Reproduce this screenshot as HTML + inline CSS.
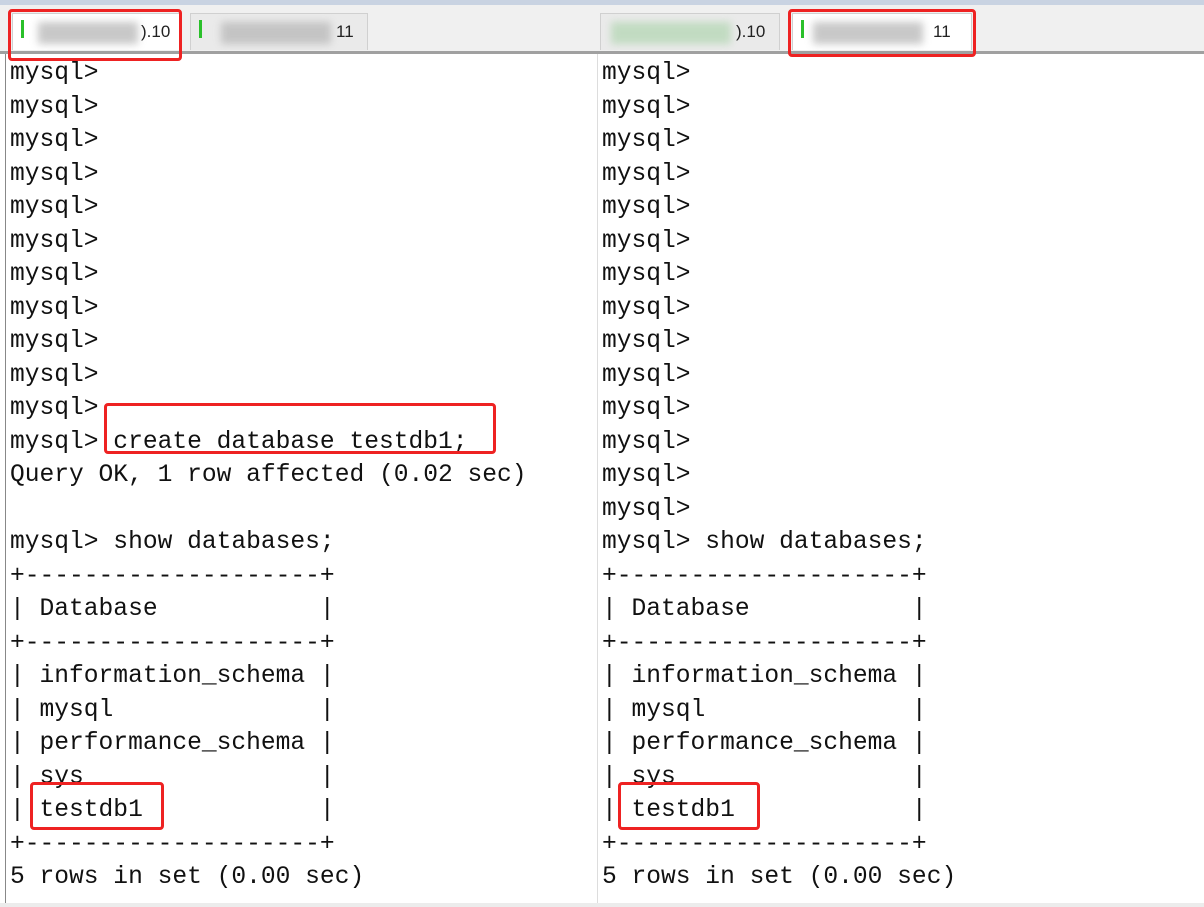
<!DOCTYPE html>
<html><head><meta charset="utf-8"><style>
html,body{margin:0;padding:0;width:1204px;height:907px;overflow:hidden;background:#fff;position:relative}
.top{position:absolute;left:0;top:0;width:1204px;height:5px;background:#c9d3e2}
.bar{position:absolute;top:5px;height:46px;background:#f0f0f0;border-bottom:3px solid #a0a0a0}
.tab{position:absolute;top:13px;height:36px;border:1px solid #d0d0d0;border-bottom:none;font:17px "Liberation Sans",sans-serif;color:#222}
.g{position:absolute;left:8px;top:6px;width:3px;height:18px;background:#2ac02a}
.blur{position:absolute;top:8px;height:22px;background:#bbb;filter:blur(4px);opacity:.8}
.num{position:absolute;top:8px}
pre{position:absolute;margin:0;top:57px;font:24.6px/33.5px "Liberation Mono",monospace;color:#111}
.red{position:absolute;border:3px solid #ee2222;border-radius:4px}
.vl{position:absolute;width:1px;background:#bbb}
</style></head><body>
<div class="top"></div>
<div class="bar" style="left:0;width:1204px"></div>
<div class="tab" style="left:12px;width:168px;background:#fff"><div class="g"></div><div class="blur" style="left:25px;width:100px"></div><span class="num" style="left:128px">).10</span></div>
<div class="tab" style="left:190px;width:176px;background:#eaeaea"><div class="g"></div><div class="blur" style="left:30px;width:110px"></div><span class="num" style="left:145px">11</span></div>
<div class="tab" style="left:600px;width:178px;background:#eaeaea"><div class="blur" style="left:10px;width:120px;background:#b8d8b8"></div><span class="num" style="left:135px">).10</span></div>
<div class="tab" style="left:792px;width:178px;background:#fff"><div class="g"></div><div class="blur" style="left:20px;width:110px"></div><span class="num" style="left:140px">11</span></div>
<div class="vl" style="left:5px;top:54px;height:850px;background:#888"></div>
<div class="vl" style="left:597px;top:54px;height:850px;background:#ddd"></div>
<div style="position:absolute;left:0;top:903px;width:1204px;height:4px;background:#ececec"></div>
<pre style="left:10px">mysql>
mysql>
mysql>
mysql>
mysql>
mysql>
mysql>
mysql>
mysql>
mysql>
mysql>
mysql> create database testdb1;
Query OK, 1 row affected (0.02 sec)

mysql> show databases;
+--------------------+
| Database           |
+--------------------+
| information_schema |
| mysql              |
| performance_schema |
| sys                |
| testdb1            |
+--------------------+
5 rows in set (0.00 sec)</pre>
<pre style="left:602px">mysql>
mysql>
mysql>
mysql>
mysql>
mysql>
mysql>
mysql>
mysql>
mysql>
mysql>
mysql>
mysql>
mysql>
mysql> show databases;
+--------------------+
| Database           |
+--------------------+
| information_schema |
| mysql              |
| performance_schema |
| sys                |
| testdb1            |
+--------------------+
5 rows in set (0.00 sec)</pre>
<div class="red" style="left:8px;top:9px;width:168px;height:46px"></div>
<div class="red" style="left:788px;top:9px;width:182px;height:42px"></div>
<div class="red" style="left:104px;top:403px;width:386px;height:45px"></div>
<div class="red" style="left:30px;top:782px;width:128px;height:42px"></div>
<div class="red" style="left:618px;top:782px;width:136px;height:42px"></div>
</body></html>
